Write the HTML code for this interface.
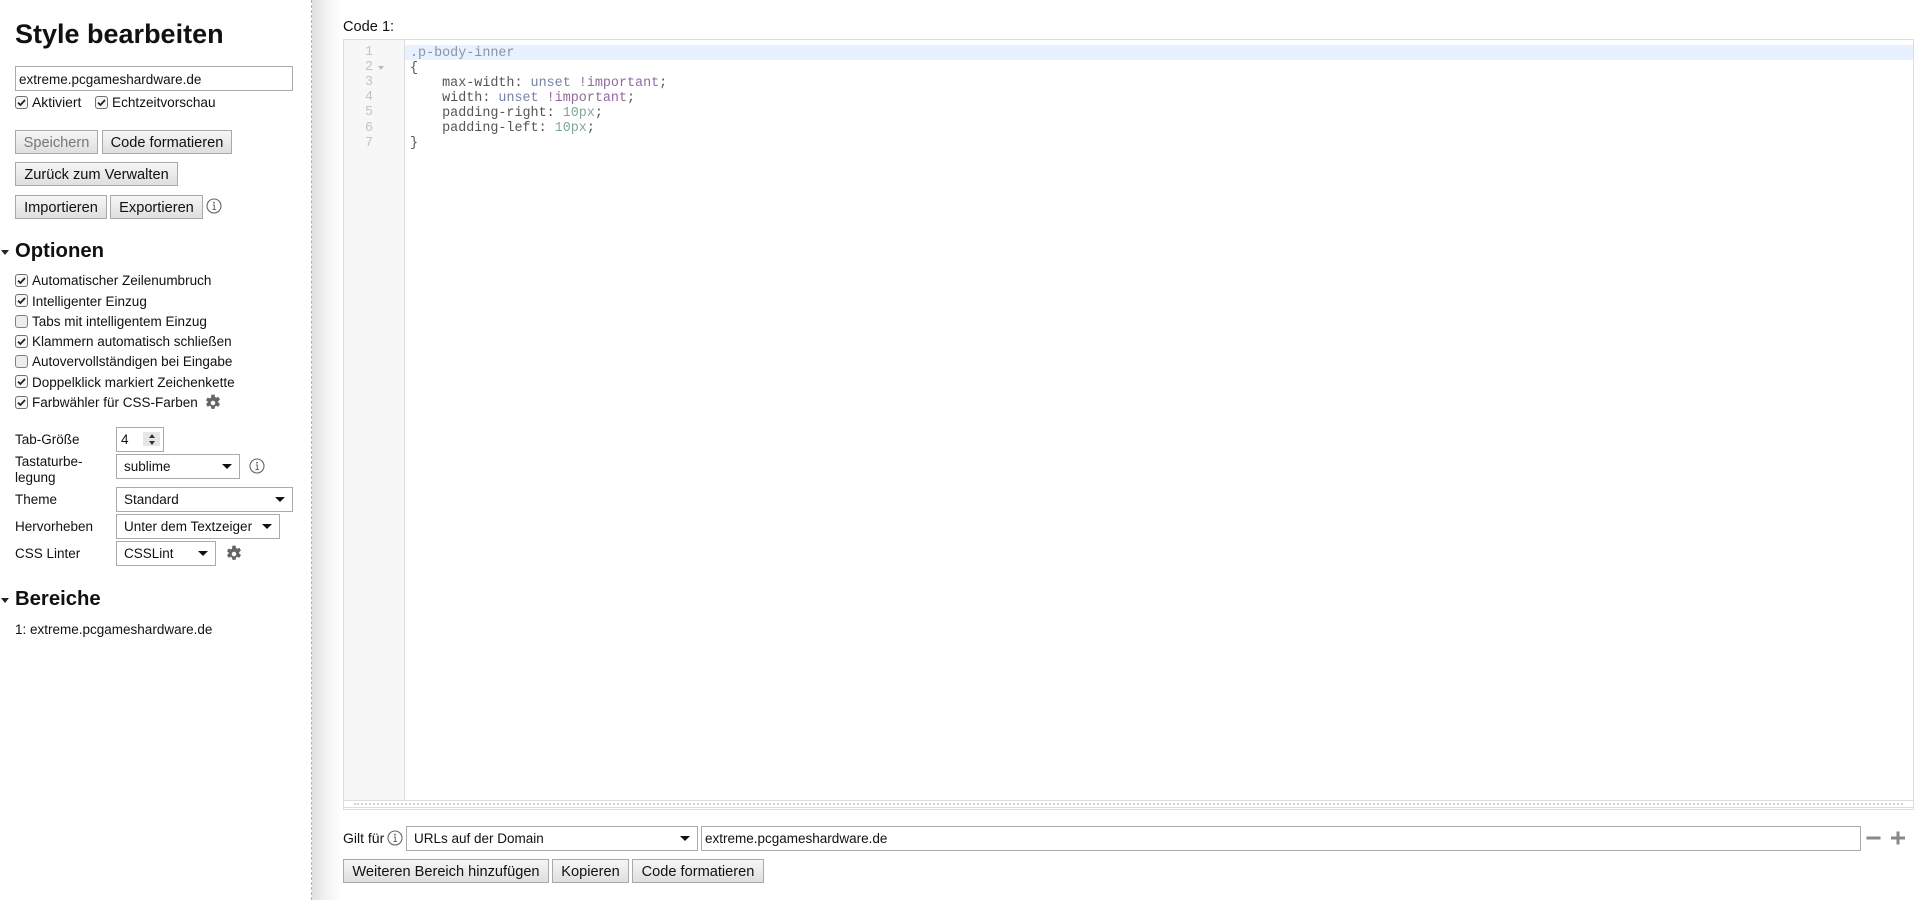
<!DOCTYPE html>
<html lang="de"><head><meta charset="utf-8"><title>Style bearbeiten</title>
<style>
html,body{margin:0;padding:0;width:1920px;height:900px;overflow:hidden;background:#fff;font-family:"Liberation Sans",sans-serif;font-size:13.5px;color:#111}
#w{position:absolute;left:0;top:0;width:1920px;height:900px;filter:blur(.3px)}
.a{position:absolute;white-space:nowrap}
.sh{position:absolute;left:312px;top:0;width:30px;height:900px;background:linear-gradient(to right,#e0e0e0,#f3f3f3 50%,#fff)}
.dash{position:absolute;left:311px;top:0;height:900px;border-left:1px dashed #b0b0b0}
.btn{position:absolute;height:22px;line-height:24px;text-align:center;border:1px solid #a9a9a9;background:linear-gradient(#f6f6f6,#dedede);font-size:14.6px;color:#111;white-space:nowrap}
.inp{position:absolute;box-sizing:border-box;border:1px solid #aaa;background:#fff;white-space:nowrap;padding-left:3px}
.sel{position:absolute;box-sizing:border-box;border:1px solid #aaa;background:#fff;white-space:nowrap;padding-left:7px}
.sel:after{content:"";position:absolute;right:7px;top:9px;border-left:5px solid transparent;border-right:5px solid transparent;border-top:5px solid #111}
.cb{position:absolute;width:13px;height:13px;box-sizing:border-box;border:1px solid #808080;border-radius:3px;background:#ececec}
.cb.on{background:#f6f6f6;border-color:#707070}
.cb.on svg{position:absolute;left:0;top:0}
h2{position:absolute;margin:0;font-size:20.3px;line-height:24px;font-weight:bold;color:#111}
.tri{position:absolute;left:1px;border-left:4px solid transparent;border-right:4px solid transparent;border-top:5px solid #222}
.ed{position:absolute;left:343px;top:39px;width:1571px;height:771px;box-sizing:border-box;border:1px solid #ddd;background:#fff}
.gut{position:absolute;left:0;top:0;width:60px;height:760px;background:#f7f7f7;border-right:1px solid #ddd}
.al{position:absolute;left:61px;right:0;top:5px;height:15px;background:#e8f2ff}
.cl{position:absolute;left:0;right:0;top:760px;height:8px;border-top:1px solid #ddd;border-bottom:1px solid #ddd;box-sizing:border-box}
.cl i{position:absolute;left:10px;right:10px;top:2px;height:0;border-top:2px dotted #d4d4d4}
.n{position:absolute;width:29px;text-align:right;font:13.4px/15px "Liberation Mono",monospace;color:#c4c4c4;left:0}
.c{position:absolute;left:66px;font:13.4px/15px "Liberation Mono",monospace;color:#555;white-space:pre}
.b{color:#7582a3}.m{color:#94689f}.g{color:#7fa898}.q{color:#8a92a6}
</style></head><body><div id="w">
<div class="sh"></div><div class="dash"></div>

<div class="a" style="left:15px;top:17px;font-size:27px;line-height:34px;font-weight:bold;color:#111">Style bearbeiten</div>
<div class="inp" style="left:15px;top:66px;width:278px;height:25px;line-height:25px">extreme.pcgameshardware.de</div>

<div class="cb on" style="left:15px;top:96px"><svg width="11" height="11" viewBox="0 0 11 11"><path d="M2 5.600l2.400 2.400L9 3" fill="none" stroke="#222" stroke-width="1.800"/></svg></div>
<div class="a" style="left:32px;top:94px;line-height:17px;font-size:13.9px">Aktiviert</div>
<div class="cb on" style="left:95px;top:96px"><svg width="11" height="11" viewBox="0 0 11 11"><path d="M2 5.600l2.400 2.400L9 3" fill="none" stroke="#222" stroke-width="1.800"/></svg></div>
<div class="a" style="left:112px;top:94px;line-height:17px;font-size:13.6px">Echtzeitvorschau</div>

<div class="btn" style="left:15px;top:130px;width:81px;color:#777">Speichern</div>
<div class="btn" style="left:102px;top:130px;width:128px">Code formatieren</div>
<div class="btn" style="left:15px;top:162px;width:161px">Zurück zum Verwalten</div>
<div class="btn" style="left:15px;top:195px;width:90px">Importieren</div>
<div class="btn" style="left:110px;top:195px;width:91px">Exportieren</div>
<svg class="a" style="left:206px;top:198px" width="16" height="16" viewBox="0 0 16 16"><circle cx="8" cy="8" r="7" fill="none" stroke="#666" stroke-width="1.100"/><path d="M6.800 7h1.500v4.300M6.500 11.500h3.400" fill="none" stroke="#666" stroke-width="1"/><circle cx="8" cy="4.700" r=".9" fill="#666"/></svg>

<div class="tri" style="top:250px"></div>
<h2 style="left:15px;top:239px">Optionen</h2>

<div class="cb on" style="left:15px;top:274px"><svg width="11" height="11" viewBox="0 0 11 11"><path d="M2 5.600l2.400 2.400L9 3" fill="none" stroke="#222" stroke-width="1.800"/></svg></div>
<div class="a" style="left:32px;top:272px;line-height:17px">Automatischer Zeilenumbruch</div>
<div class="cb on" style="left:15px;top:294px"><svg width="11" height="11" viewBox="0 0 11 11"><path d="M2 5.600l2.400 2.400L9 3" fill="none" stroke="#222" stroke-width="1.800"/></svg></div>
<div class="a" style="left:32px;top:293px;line-height:17px">Intelligenter Einzug</div>
<div class="cb" style="left:15px;top:315px"></div>
<div class="a" style="left:32px;top:313px;line-height:17px">Tabs mit intelligentem Einzug</div>
<div class="cb on" style="left:15px;top:335px"><svg width="11" height="11" viewBox="0 0 11 11"><path d="M2 5.600l2.400 2.400L9 3" fill="none" stroke="#222" stroke-width="1.800"/></svg></div>
<div class="a" style="left:32px;top:333px;line-height:17px">Klammern automatisch schließen</div>
<div class="cb" style="left:15px;top:355px"></div>
<div class="a" style="left:32px;top:353px;line-height:17px">Autovervollständigen bei Eingabe</div>
<div class="cb on" style="left:15px;top:375px"><svg width="11" height="11" viewBox="0 0 11 11"><path d="M2 5.600l2.400 2.400L9 3" fill="none" stroke="#222" stroke-width="1.800"/></svg></div>
<div class="a" style="left:32px;top:374px;line-height:17px">Doppelklick markiert Zeichenkette</div>
<div class="cb on" style="left:15px;top:396px"><svg width="11" height="11" viewBox="0 0 11 11"><path d="M2 5.600l2.400 2.400L9 3" fill="none" stroke="#222" stroke-width="1.800"/></svg></div>
<div class="a" style="left:32px;top:394px;line-height:17px">Farbwähler für CSS-Farben</div>
<svg class="a" style="left:204px;top:394px" width="18" height="18" viewBox="0 0 16 16"><path fill-rule="evenodd" fill="#666" d="M6.600 0.600h2.800l.4 2.100 1 .6 2-.8 1.400 2.400-1.600 1.400v1.200l1.600 1.400-1.400 2.400-2-.8-1 .6-.4 2.100H6.600l-.4-2.100-1-.6-2 .8-1.400-2.400 1.600-1.400V6.900l-1.600-1.400 1.400-2.400 2 .8 1-.6zM8 6a2 2 0 1 0 0 4 2 2 0 0 0 0-4z"/></svg>

<div class="a" style="left:15px;top:431px;line-height:17px">Tab-Größe</div>
<div class="inp" style="left:116px;top:427px;width:48px;height:25px;line-height:23px;padding-left:4px">4
<span class="a" style="left:26px;top:4px;width:17px;height:14px;background:#e6e6e6"></span>
<span class="a" style="left:32px;top:6px;border-left:3px solid transparent;border-right:3px solid transparent;border-bottom:4px solid #333"></span>
<span class="a" style="left:32px;top:13px;border-left:3px solid transparent;border-right:3px solid transparent;border-top:4px solid #333"></span></div>

<div class="a" style="left:15px;top:454px;line-height:16px">Tastaturbe-<br>legung</div>
<div class="sel" style="left:116px;top:454px;width:124px;height:25px;line-height:23px">sublime</div>
<svg class="a" style="left:249px;top:458px" width="16" height="16" viewBox="0 0 16 16"><circle cx="8" cy="8" r="7" fill="none" stroke="#666" stroke-width="1.100"/><path d="M6.800 7h1.500v4.300M6.500 11.500h3.400" fill="none" stroke="#666" stroke-width="1"/><circle cx="8" cy="4.700" r=".9" fill="#666"/></svg>

<div class="a" style="left:15px;top:491px;line-height:17px">Theme</div>
<div class="sel" style="left:116px;top:487px;width:177px;height:25px;line-height:23px">Standard</div>
<div class="a" style="left:15px;top:518px;line-height:17px">Hervorheben</div>
<div class="sel" style="left:116px;top:514px;width:164px;height:25px;line-height:23px">Unter dem Textzeiger</div>
<div class="a" style="left:15px;top:545px;line-height:17px">CSS Linter</div>
<div class="sel" style="left:116px;top:541px;width:100px;height:25px;line-height:23px">CSSLint</div>
<svg class="a" style="left:225px;top:545px" width="18" height="18" viewBox="0 0 16 16"><path fill-rule="evenodd" fill="#666" d="M6.600 0.600h2.800l.4 2.100 1 .6 2-.8 1.400 2.400-1.600 1.400v1.200l1.600 1.400-1.400 2.400-2-.8-1 .6-.4 2.100H6.600l-.4-2.100-1-.6-2 .8-1.400-2.400 1.600-1.400V6.900l-1.600-1.400 1.400-2.400 2 .8 1-.6zM8 6a2 2 0 1 0 0 4 2 2 0 0 0 0-4z"/></svg>

<div class="tri" style="top:598px"></div>
<h2 style="left:15px;top:587px">Bereiche</h2>
<div class="a" style="left:15px;top:621px;line-height:17px">1: extreme.pcgameshardware.de</div>

<div class="a" style="left:343px;top:18px;line-height:18px;font-size:14.6px">Code 1:</div>
<div class="ed">
  <div class="gut"></div>
  <div class="al"></div>
  <div class="n" style="top:5px">1</div>
  <div class="n" style="top:20px">2</div>
  <div class="a" style="left:34px;top:26px;border-left:3px solid transparent;border-right:3px solid transparent;border-top:4px solid #bbb"></div>
  <div class="n" style="top:35px">3</div>
  <div class="n" style="top:50px">4</div>
  <div class="n" style="top:65px">5</div>
  <div class="n" style="top:81px">6</div>
  <div class="n" style="top:96px">7</div>
  <div class="c" style="top:6px"><span class="q">.p-body-inner</span></div>
  <div class="c" style="top:21px">{</div>
  <div class="c" style="top:36px">    max-width: <span class="b">unset</span> <span class="m">!important</span>;</div>
  <div class="c" style="top:51px">    width: <span class="b">unset</span> <span class="m">!important</span>;</div>
  <div class="c" style="top:66px">    padding-right: <span class="g">10px</span>;</div>
  <div class="c" style="top:81px">    padding-left: <span class="g">10px</span>;</div>
  <div class="c" style="top:96px">}</div>
  <div class="cl"><i></i></div>
</div>

<div class="a" style="left:343px;top:829px;line-height:18px;font-size:14px">Gilt für</div>
<svg class="a" style="left:387px;top:830px" width="16" height="16" viewBox="0 0 16 16"><circle cx="8" cy="8" r="7" fill="none" stroke="#666" stroke-width="1.100"/><path d="M6.800 7h1.500v4.300M6.500 11.500h3.400" fill="none" stroke="#666" stroke-width="1"/><circle cx="8" cy="4.700" r=".9" fill="#666"/></svg>
<div class="sel" style="left:406px;top:826px;width:292px;height:25px;line-height:23px">URLs auf der Domain</div>
<div class="inp" style="left:701px;top:826px;width:1160px;height:25px;line-height:23px">extreme.pcgameshardware.de</div>
<svg class="a" style="left:1865px;top:830px" width="44" height="16" viewBox="0 0 44 16"><path d="M1.500 8h14M26 8h14M33 1.500v13" fill="none" stroke="#888" stroke-width="3"/></svg>

<div class="btn" style="left:343px;top:859px;width:204px">Weiteren Bereich hinzufügen</div>
<div class="btn" style="left:552px;top:859px;width:75px">Kopieren</div>
<div class="btn" style="left:632px;top:859px;width:130px">Code formatieren</div>
</div></body></html>
